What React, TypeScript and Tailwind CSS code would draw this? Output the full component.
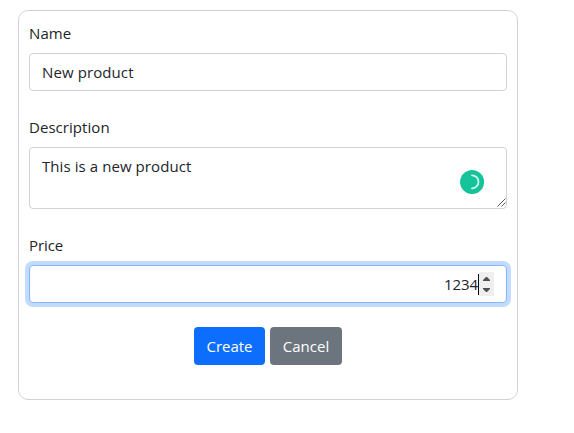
import React from "react";

const field =
  "block w-full rounded border bg-white text-[#212529] outline-none";

function Label({ htmlFor, className, children }: { htmlFor: string; className: string; children: string }) {
  return (
    <label htmlFor={htmlFor} className="mb-2 flex h-6 items-center">
      <span className={className}>{children}</span>
    </label>
  );
}

export default function App() {
  return (
    <div className="h-[433px] w-[574px] bg-white pt-[10px] pl-[18px] font-['Open_Sans','Noto_Sans',sans-serif] text-[15px] leading-6 text-[#212529]">
      <form className="h-[390px] w-[500px] rounded-[10px] border border-[#ced4da] p-[10px]">
        <div className="mb-6">
          <Label htmlFor="name" className="tracking-[0.1px]">Name</Label>
          <input
            id="name"
            defaultValue="New product"
            className={`${field} h-[38px] border-[#ced4da] px-3 py-1.5 tracking-[0.1px]`}
          />
        </div>
        <div className="mb-6">
          <Label htmlFor="description" className="tracking-[0.05px]">Description</Label>
          <div className="relative">
            <textarea
              id="description"
              defaultValue="This is a new product"
              className={`${field} h-[62px] resize-none border-[#ced4da] px-3 py-1.5 tracking-[0.08px]`}
            />
            <svg className="absolute top-[22px] left-[431px]" width="25" height="25" viewBox="0 0 25 25" fill="none">
              <circle cx="12.1" cy="12.9" r="12" fill="#15c39a" />
              <path d="M12 6.3A6.5 6.5 0 1 1 12 19.3" stroke="#d5f4ec" strokeWidth="1.8" strokeLinecap="round" />
            </svg>
            <svg className="absolute right-[1px] bottom-[2px]" width="9" height="9" viewBox="0 0 9 9" stroke="#55585b" strokeWidth="1">
              <path d="M.5 8.5l8-8M4.5 8.5l4-4" />
            </svg>
          </div>
        </div>
        <div className="mb-6">
          <Label htmlFor="price" className="tracking-[-0.1px]">Price</Label>
          <div className="flex h-[38px] items-center rounded border border-[#86b7fe] bg-white pr-3 shadow-[0_0_0_4px_rgba(13,110,253,0.25)]">
            <input
              id="price"
              defaultValue="1234"
              inputMode="numeric"
              className="h-9 min-w-0 flex-1 bg-transparent text-right tracking-[-0.1px] text-[#212529] outline-none"
            />
            <span className="h-[21px] w-px bg-black" />
            <span className="flex h-6 w-[15px] flex-col items-center justify-center gap-[7px] bg-[#efefef]">
              <svg width="7" height="4" viewBox="0 0 7 4" fill="#505050"><path d="M0 4V3L3 0h1l3 3v1z" /></svg>
              <svg width="7" height="4" viewBox="0 0 7 4" fill="#505050"><path d="M0 0v1l3 3h1l3-3V0z" /></svg>
            </span>
          </div>
        </div>
        <div className="flex justify-center gap-[5px] text-white">
          <button type="button" className="h-[38px] w-[71px] rounded bg-[#0d6efd]">Create</button>
          <button type="button" className="h-[38px] w-[72px] rounded bg-[#6c757d]">Cancel</button>
        </div>
      </form>
    </div>
  );
}
